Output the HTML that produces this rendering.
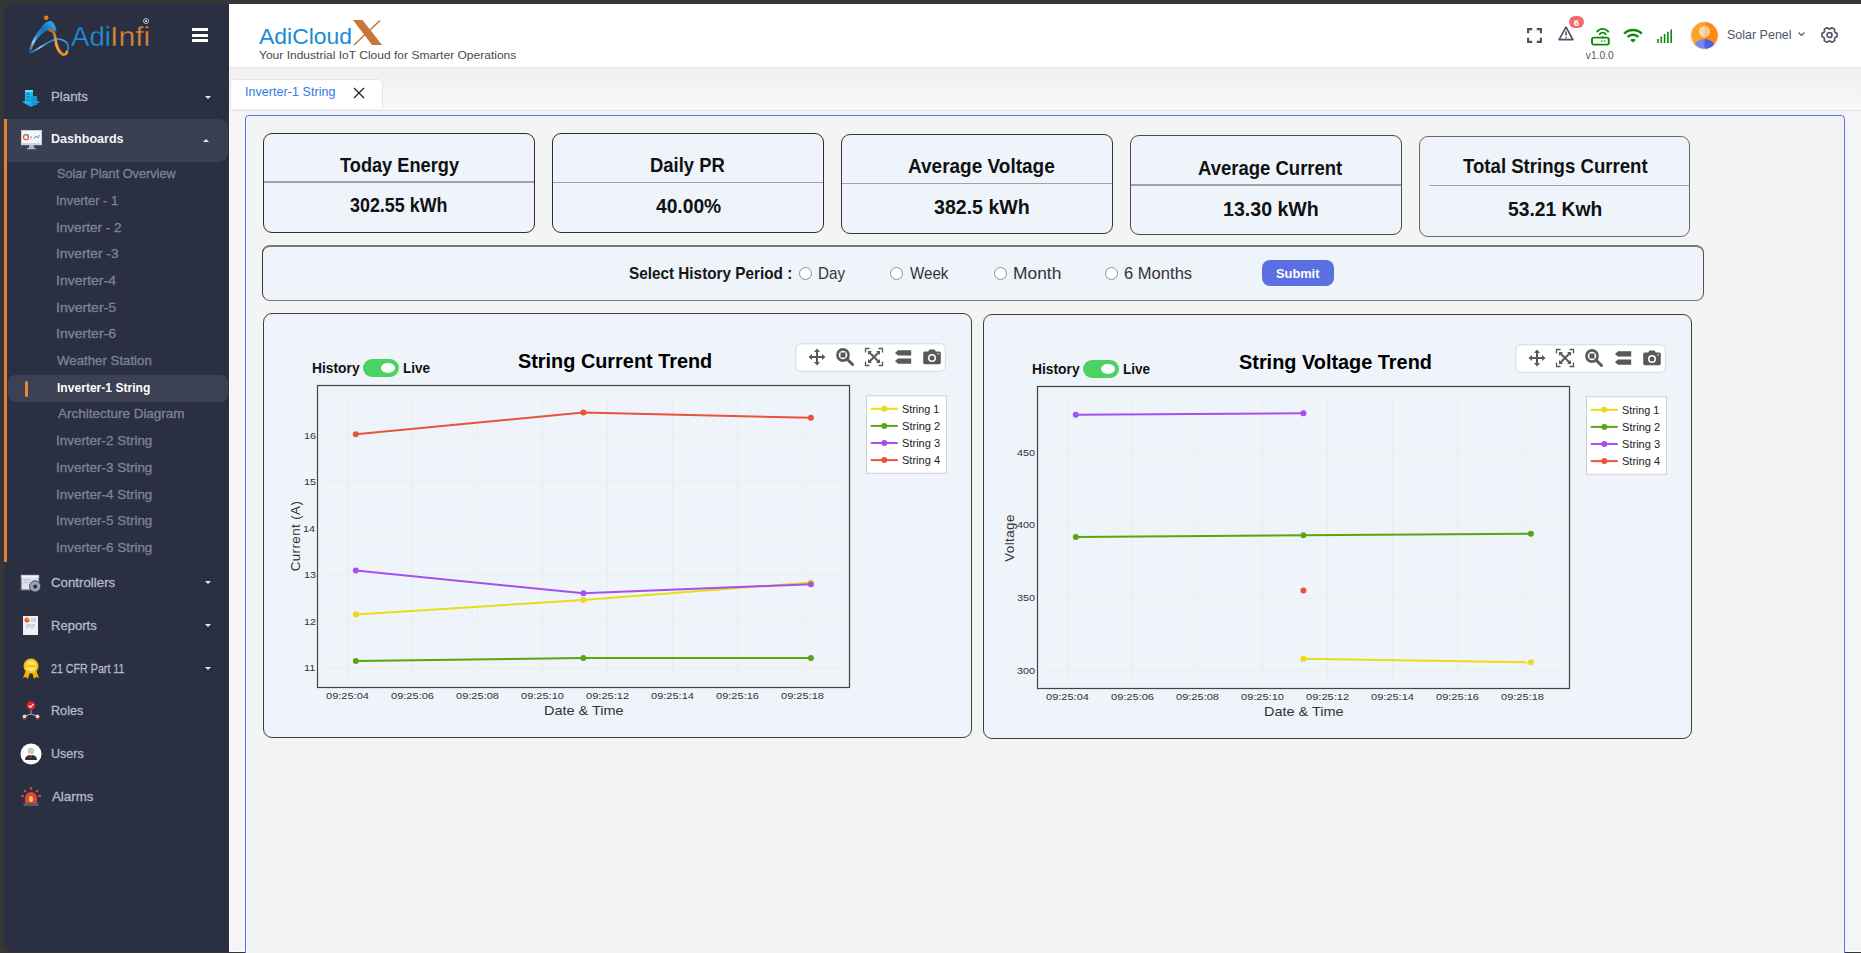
<!DOCTYPE html>
<html><head><meta charset="utf-8"><style>
*{box-sizing:border-box;margin:0;padding:0}
html,body{width:1861px;height:953px;overflow:hidden;background:#363636;font-family:"Liberation Sans",sans-serif}
.ab{position:absolute}
.tx{position:absolute;line-height:1;white-space:nowrap}
svg{position:absolute;overflow:visible}
</style></head><body>
<div class="ab" style="left:229px;top:4px;width:1632px;height:948px;background:#f5f5f8"></div>
<div class="ab" style="left:229px;top:4px;width:1px;height:948px;background:#fff"></div>
<div class="ab" style="left:229px;top:4px;width:1632px;height:64px;background:#fff;border-bottom:1px solid #e9e9ee"></div>
<div class="ab" style="left:4px;top:4px;width:225px;height:948px;background:#2a2f42;border-radius:8px 0 0 8px"></div>
<div class="ab" style="left:229px;top:951px;width:1632px;height:1px;background:#fff"></div>
<svg style="left:24px;top:12px" width="50" height="48" viewBox="0 0 50 48">
<defs><linearGradient id="lgb" x1="0" y1="1" x2="0.7" y2="0"><stop offset="0" stop-color="#1a5a95"/><stop offset="0.3" stop-color="#8fd0f5"/><stop offset="0.5" stop-color="#2a8ad6"/><stop offset="0.75" stop-color="#1670b8"/><stop offset="1" stop-color="#2fa0e6"/></linearGradient>
<linearGradient id="lgb2" x1="0" y1="1" x2="1" y2="0"><stop offset="0" stop-color="#1a5a95"/><stop offset="0.35" stop-color="#8fd0f5"/><stop offset="0.6" stop-color="#1e86d4"/><stop offset="1" stop-color="#3aa4e8"/></linearGradient>
<linearGradient id="lgo" x1="0" y1="0" x2="0" y2="1"><stop offset="0" stop-color="#b06a30"/><stop offset="0.6" stop-color="#f3a555"/><stop offset="1" stop-color="#f08a25"/></linearGradient></defs>
<circle cx="22.2" cy="5.8" r="2.3" fill="#f07a22"/>
<path d="M5 40.3 C 6 32, 11 22, 20 12 C 23 9.5, 26 8.5, 28 9.5 C 30.5 11, 32 15, 32.5 19.5 C 30 18.3, 27 17.6, 25 18 C 18 20, 11 27, 7.5 38 Z" fill="url(#lgb)"/>
<path d="M5.5 41 C 12 39, 19 33, 26 29.5 C 32 26.5, 38 26.5, 42 30 C 45 33, 45 38, 42 40.5" fill="none" stroke="url(#lgb2)" stroke-width="1.7"/>
<path d="M25.5 18 C 29 18, 31 22, 31.5 27 C 32 33, 34 39, 38 42 C 40 43.5, 42.5 42, 43 40" fill="none" stroke="url(#lgo)" stroke-width="2.8" stroke-linecap="round"/>
</svg>
<div class="tx " style="left:70.80px;top:23.00px;font-size:28px;color:#1e90d8;font-weight:normal;letter-spacing:0px;transform-origin:0 0;transform:scaleX(0.9886);-webkit-text-stroke:0.3px #2a2f42;">Adi</div>
<div class="tx " style="left:109.78px;top:23.00px;font-size:28px;color:#d98435;font-weight:normal;letter-spacing:0px;transform-origin:0 0;transform:scaleX(1.0790);-webkit-text-stroke:0.3px #2a2f42;">Infi</div>
<div class="ab" style="left:143px;top:18px;width:6px;height:6px;border:0.8px solid #b8bcc8;border-radius:50%"></div>
<div class="ab" style="left:145px;top:20px;width:2px;height:2px;background:#b8bcc8"></div>
<div class="ab" style="left:191.7px;top:28px;width:16.30000000000001px;height:3.1000000000000014px;background:#fff;border-radius:0.5px"></div>
<div class="ab" style="left:191.7px;top:34px;width:16.30000000000001px;height:3.1000000000000014px;background:#fff;border-radius:0.5px"></div>
<div class="ab" style="left:191.7px;top:39.2px;width:16.30000000000001px;height:3.1000000000000014px;background:#fff;border-radius:0.5px"></div>
<div class="ab" style="left:7px;top:119px;width:221px;height:43px;background:#3a3f52;border-radius:0 9px 9px 0"></div>
<div class="ab" style="left:4px;top:119px;width:3px;height:443px;background:#d9843a"></div>
<div class="ab" style="left:8px;top:375px;width:220px;height:26.5px;background:#3b4053;border-radius:7px"></div>
<div class="ab" style="left:25px;top:381px;width:3px;height:16px;background:#e08a3a;border-radius:1.5px"></div>
<div class="tx " style="left:50.94px;top:91.00px;font-size:12.8px;color:#b3b8cf;font-weight:normal;letter-spacing:0px;transform-origin:0 0;transform:scaleX(1.0378);-webkit-text-stroke:0.3px #b3b8cf;">Plants</div>
<div class="ab" style="left:205.0px;top:95.5px;width:0;height:0;border-left:3.5px solid transparent;border-right:3.5px solid transparent;border-top:3.6px solid #e6e8f0"></div>
<svg style="left:21px;top:89px" width="20" height="18" viewBox="0 0 20 18">
<path d="M1 13 L10 18 L19 13 L10 9 Z" fill="#18a9e8"/>
<rect x="4" y="1" width="8" height="14" fill="#1fb6f0"/><rect x="4" y="1" width="8" height="2" fill="#6fd6ff"/>
<rect x="10" y="7" width="6" height="9" fill="#1597d6"/>
<path d="M5 5h4M5 8h4M5 11h4" stroke="#0a6aa8" stroke-width="0.9"/>
</svg>
<div class="tx " style="left:51.18px;top:133.00px;font-size:12.6px;color:#f2f3f7;font-weight:bold;letter-spacing:0px;transform-origin:0 0;transform:scaleX(0.9971);">Dashboards</div>
<div class="ab" style="left:202.5px;top:139.0px;width:0;height:0;border-left:3.5px solid transparent;border-right:3.5px solid transparent;border-bottom:3.6px solid #e6e8f0"></div>
<svg style="left:21px;top:130px" width="21" height="20" viewBox="0 0 21 20">
<rect x="0.5" y="0.5" width="20" height="13" fill="#f4f6f8" stroke="#c9d2da"/>
<rect x="0" y="13" width="21" height="2.2" fill="#c9d6de"/>
<rect x="8" y="15" width="5" height="3" fill="#a9b9c4"/><rect x="6" y="18" width="9" height="1.2" fill="#a9b9c4"/>
<circle cx="5" cy="7.2" r="2.5" fill="none" stroke="#e8553f" stroke-width="1.3"/>
<path d="M5 4.7 A2.5 2.5 0 0 1 7.5 7.2" stroke="#2aa6d9" stroke-width="1.3" fill="none"/>
<path d="M13 9l2-3 2 2 1.5-3" stroke="#3ba3d8" stroke-width="1" fill="none"/>
<rect x="9" y="6" width="2" height="3" fill="#f3b7b7"/>
</svg>
<div class="tx " style="left:56.93px;top:168.00px;font-size:12.6px;color:#7d8299;font-weight:normal;letter-spacing:0px;transform-origin:0 0;transform:scaleX(1.0092);-webkit-text-stroke:0.3px #7d8299;">Solar Plant Overview</div>
<div class="tx " style="left:56.34px;top:195.00px;font-size:12.6px;color:#7d8299;font-weight:normal;letter-spacing:0px;transform-origin:0 0;transform:scaleX(1.0199);-webkit-text-stroke:0.3px #7d8299;">Inverter - 1</div>
<div class="tx " style="left:56.28px;top:222.00px;font-size:12.6px;color:#7d8299;font-weight:normal;letter-spacing:0px;transform-origin:0 0;transform:scaleX(1.0768);-webkit-text-stroke:0.3px #7d8299;">Inverter - 2</div>
<div class="tx " style="left:56.26px;top:248.00px;font-size:12.6px;color:#7d8299;font-weight:normal;letter-spacing:0px;transform-origin:0 0;transform:scaleX(1.0905);-webkit-text-stroke:0.3px #7d8299;">Inverter -3</div>
<div class="tx " style="left:56.24px;top:275.00px;font-size:12.6px;color:#7d8299;font-weight:normal;letter-spacing:0px;transform-origin:0 0;transform:scaleX(1.1123);-webkit-text-stroke:0.3px #7d8299;">Inverter-4</div>
<div class="tx " style="left:56.24px;top:302.00px;font-size:12.6px;color:#7d8299;font-weight:normal;letter-spacing:0px;transform-origin:0 0;transform:scaleX(1.1149);-webkit-text-stroke:0.3px #7d8299;">Inverter-5</div>
<div class="tx " style="left:56.24px;top:328.00px;font-size:12.6px;color:#7d8299;font-weight:normal;letter-spacing:0px;transform-origin:0 0;transform:scaleX(1.1149);-webkit-text-stroke:0.3px #7d8299;">Inverter-6</div>
<div class="tx " style="left:57.43px;top:355.00px;font-size:12.6px;color:#7d8299;font-weight:normal;letter-spacing:0px;transform-origin:0 0;transform:scaleX(1.0526);-webkit-text-stroke:0.3px #7d8299;">Weather Station</div>
<div class="tx " style="left:56.71px;top:382.00px;font-size:12.6px;color:#ffffff;font-weight:bold;letter-spacing:0px;transform-origin:0 0;transform:scaleX(0.9593);">Inverter-1 String</div>
<div class="tx " style="left:57.50px;top:408.00px;font-size:12.6px;color:#7d8299;font-weight:normal;letter-spacing:0px;transform-origin:0 0;transform:scaleX(1.0701);-webkit-text-stroke:0.3px #7d8299;">Architecture Diagram</div>
<div class="tx " style="left:56.29px;top:435.00px;font-size:12.6px;color:#7d8299;font-weight:normal;letter-spacing:0px;transform-origin:0 0;transform:scaleX(1.0669);-webkit-text-stroke:0.3px #7d8299;">Inverter-2 String</div>
<div class="tx " style="left:56.29px;top:462.00px;font-size:12.6px;color:#7d8299;font-weight:normal;letter-spacing:0px;transform-origin:0 0;transform:scaleX(1.0669);-webkit-text-stroke:0.3px #7d8299;">Inverter-3 String</div>
<div class="tx " style="left:56.29px;top:489.00px;font-size:12.6px;color:#7d8299;font-weight:normal;letter-spacing:0px;transform-origin:0 0;transform:scaleX(1.0669);-webkit-text-stroke:0.3px #7d8299;">Inverter-4 String</div>
<div class="tx " style="left:56.29px;top:515.00px;font-size:12.6px;color:#7d8299;font-weight:normal;letter-spacing:0px;transform-origin:0 0;transform:scaleX(1.0669);-webkit-text-stroke:0.3px #7d8299;">Inverter-5 String</div>
<div class="tx " style="left:56.29px;top:542.00px;font-size:12.6px;color:#7d8299;font-weight:normal;letter-spacing:0px;transform-origin:0 0;transform:scaleX(1.0669);-webkit-text-stroke:0.3px #7d8299;">Inverter-6 String</div>
<div class="tx " style="left:51.34px;top:577.00px;font-size:12.8px;color:#b3b8cf;font-weight:normal;letter-spacing:0px;transform-origin:0 0;transform:scaleX(1.0378);-webkit-text-stroke:0.3px #b3b8cf;">Controllers</div>
<div class="ab" style="left:205.0px;top:581.2px;width:0;height:0;border-left:3.5px solid transparent;border-right:3.5px solid transparent;border-top:3.6px solid #e6e8f0"></div>
<div class="tx " style="left:50.96px;top:620.00px;font-size:12.8px;color:#b3b8cf;font-weight:normal;letter-spacing:0px;transform-origin:0 0;transform:scaleX(1.0201);-webkit-text-stroke:0.3px #b3b8cf;">Reports</div>
<div class="ab" style="left:205.0px;top:624.2px;width:0;height:0;border-left:3.5px solid transparent;border-right:3.5px solid transparent;border-top:3.6px solid #e6e8f0"></div>
<div class="tx " style="left:51.47px;top:663.00px;font-size:12.8px;color:#b3b8cf;font-weight:normal;letter-spacing:0px;transform-origin:0 0;transform:scaleX(0.8349);-webkit-text-stroke:0.3px #b3b8cf;">21 CFR Part 11</div>
<div class="ab" style="left:205.0px;top:667.2px;width:0;height:0;border-left:3.5px solid transparent;border-right:3.5px solid transparent;border-top:3.6px solid #e6e8f0"></div>
<div class="tx " style="left:50.99px;top:705.00px;font-size:12.8px;color:#b3b8cf;font-weight:normal;letter-spacing:0px;transform-origin:0 0;transform:scaleX(0.9862);-webkit-text-stroke:0.3px #b3b8cf;">Roles</div>
<div class="tx " style="left:51.06px;top:748.00px;font-size:12.8px;color:#b3b8cf;font-weight:normal;letter-spacing:0px;transform-origin:0 0;transform:scaleX(0.9781);-webkit-text-stroke:0.3px #b3b8cf;">Users</div>
<div class="tx " style="left:52.00px;top:791.00px;font-size:12.8px;color:#b3b8cf;font-weight:normal;letter-spacing:0px;transform-origin:0 0;transform:scaleX(1.0391);-webkit-text-stroke:0.3px #b3b8cf;">Alarms</div>
<svg style="left:20px;top:574px" width="24" height="20" viewBox="0 0 24 20">
<rect x="1.3" y="1.3" width="17.5" height="14.5" fill="#dfe2ea" stroke="#8a8d96" stroke-width="1.1"/><rect x="1.3" y="1.3" width="17.5" height="2.2" fill="#f2f3f6"/>
<path d="M3.5 6h7M3.5 8.5h5" stroke="#b5b9c6" stroke-width="0.9"/>
<circle cx="15.1" cy="12.4" r="5.6" fill="#9aa0b6" stroke="#2a2f42" stroke-width="0.8"/><circle cx="15.1" cy="12.4" r="2" fill="#2a2f42"/>
</svg>
<svg style="left:23px;top:616px" width="15" height="19" viewBox="0 0 15 19">
<rect x="0" y="0" width="15" height="19" fill="#eef0f3"/><circle cx="4" cy="4" r="2.5" fill="#e85a3a"/><path d="M4 4 L4 1.5 A2.5 2.5 0 0 1 6.5 4Z" fill="#f5b400"/>
<path d="M8 3h5M8 5h5M3 9h9M3 12l3-2 3 2 3-3" stroke="#aab" stroke-width="0.8" fill="none"/>
</svg>
<svg style="left:22px;top:658px" width="18" height="22" viewBox="0 0 18 22">
<path d="M4 12 L1 20 L4 19 L6 21 L8 14Z M14 12 L17 20 L14 19 L12 21 L10 14Z" fill="#f1b300"/>
<circle cx="9" cy="8" r="7.5" fill="#f4c20d"/><circle cx="9" cy="8" r="5.2" fill="#fde08a"/><rect x="4.5" y="6.8" width="9" height="2.6" fill="#f4c20d"/>
</svg>
<svg style="left:22px;top:701px" width="18" height="20" viewBox="0 0 18 20">
<circle cx="9" cy="4.5" r="4.3" fill="#e8202a"/><path d="M6.8 4.6l1.6 1.6 3-3" stroke="#fff" stroke-width="1.2" fill="none"/>
<path d="M9 9v4M9 13l-6 2M9 13l6 2" stroke="#ccc" stroke-width="0.8"/>
<circle cx="2.5" cy="15.5" r="2" fill="#cfd3da"/><circle cx="15.5" cy="15.5" r="2" fill="#cfd3da"/>
<path d="M1 18h3M14 18h3" stroke="#d02828" stroke-width="1.5"/>
</svg>
<svg style="left:20px;top:743px" width="22" height="22" viewBox="0 0 22 22">
<circle cx="11" cy="11" r="10.5" fill="#fff"/><circle cx="11" cy="8" r="3.3" fill="#c9c9c9"/><path d="M5 17 Q5 12 11 12 Q17 12 17 17Z" fill="#333"/><path d="M10 12l1 3 1-3z" fill="#d42"/>
</svg>
<svg style="left:20px;top:786px" width="22" height="22" viewBox="0 0 22 22">
<path d="M11 1v3M4 4l2 2M18 4l-2 2M1 10h3M18 10h3" stroke="#f05a4a" stroke-width="1.3"/>
<path d="M5 17 V12 A6 6 0 0 1 17 12 V17Z" fill="#e8403a"/><ellipse cx="11" cy="13" rx="2" ry="3" fill="#ffd24a"/>
<rect x="3.5" y="17" width="15" height="3" fill="#555c6a"/>
</svg>
<div class="tx " style="left:259.00px;top:26.00px;font-size:22.6px;color:#1a8bd6;font-weight:normal;letter-spacing:0px;transform-origin:0 0;transform:scaleX(1.0147);">AdiCloud</div>
<svg style="left:352px;top:19px" width="32" height="27" viewBox="0 0 32 27">
<path d="M1 1 L10.5 1 L30 26 L20 26 Z" fill="#c8773c"/>
<path d="M28 1.5 L2 26" stroke="#c8773c" stroke-width="1.6"/>
</svg>
<div class="tx " style="left:258.70px;top:50.00px;font-size:11.4px;color:#4a4a4a;font-weight:normal;letter-spacing:0px;transform-origin:0 0;transform:scaleX(1.0556);">Your Industrial IoT Cloud for Smarter Operations</div>
<svg style="left:1527px;top:28px" width="15" height="15" viewBox="0 0 15 15">
<path d="M1.1 5.2V1.1H5.2M9.8 1.1H13.9V5.2M13.9 9.8V13.9H9.8M5.2 13.9H1.1V9.8" fill="none" stroke="#4b5162" stroke-width="2.1"/>
</svg>
<svg style="left:1558.3px;top:26px" width="16" height="15" viewBox="0 0 16 15">
<path d="M8 1.2 L14.9 13.6 H1.1 Z" fill="none" stroke="#4b5162" stroke-width="1.7" stroke-linejoin="round"/>
<path d="M8 5.6v4" stroke="#4b5162" stroke-width="1.5"/><circle cx="8" cy="11.5" r="0.85" fill="#4b5162"/>
</svg>
<div class="ab" style="left:1569px;top:16px;width:15px;height:12px;border-radius:7px;background:#ef6b6b"></div>
<div class="tx " style="left:1576.50px;top:18.00px;font-size:9.5px;color:#fff;font-weight:bold;letter-spacing:0px;transform:translateX(-50%);">6</div>
<svg style="left:1590.5px;top:26.5px" width="19" height="18.5" viewBox="0 0 19 18.5">
<path d="M6.2 4.6 A7 7 0 0 1 17.2 4.6" fill="none" stroke="#0b8a0b" stroke-width="1.8" stroke-linecap="round"/>
<path d="M8.6 7.2 A3.8 3.8 0 0 1 14.8 7.2" fill="none" stroke="#0b8a0b" stroke-width="1.8" stroke-linecap="round"/>
<path d="M11.7 9.3v2.4" stroke="#0b8a0b" stroke-width="1.5"/>
<rect x="1" y="10.6" width="16.8" height="7" rx="1.8" fill="none" stroke="#0b8a0b" stroke-width="1.9"/>
<circle cx="10.8" cy="14.1" r="0.8" fill="#0b8a0b"/><circle cx="13.6" cy="14.1" r="0.8" fill="#0b8a0b"/>
</svg>
<div class="tx " style="left:1599.70px;top:51.00px;font-size:10.2px;color:#555;font-weight:normal;letter-spacing:0px;transform:translateX(-50%);">v1.0.0</div>
<svg style="left:1623px;top:29px" width="20" height="14" viewBox="0 0 20 14">
<path d="M1.2 4.6 A12.5 12.5 0 0 1 18.8 4.6" fill="none" stroke="#0b8a0b" stroke-width="2.4"/>
<path d="M4.6 8 A7.5 7.5 0 0 1 15.4 8" fill="none" stroke="#0b8a0b" stroke-width="2.4"/>
<path d="M7.2 11 L10 13.6 L12.8 11 A4 4 0 0 0 7.2 11Z" fill="#0b8a0b"/>
</svg>
<svg style="left:1656px;top:29px" width="18" height="15" viewBox="0 0 18 15">
<path d="M2 14V10M5.3 14V7.5M8.6 14V5M11.9 14V2.8M15.2 14V0.5" stroke="#0b8a0b" stroke-width="1.6"/>
</svg>
<svg style="left:1689px;top:20px" width="31" height="31" viewBox="0 0 31 31">
<circle cx="15.5" cy="15.5" r="15" fill="#f4f5f8"/>
<clipPath id="avc"><circle cx="15.5" cy="15.3" r="13.3"/></clipPath>
<g clip-path="url(#avc)">
<rect x="0" y="0" width="15.5" height="31" fill="#fca329"/><rect x="15.5" y="0" width="15.5" height="31" fill="#ff8a0d"/>
<circle cx="15.5" cy="11.5" r="5.5" fill="#fdd9a6"/><path d="M15.5 6 A5.5 5.5 0 0 1 15.5 17Z" fill="#fcc68a"/>
<path d="M4 31 Q5 19 15.5 19 Q26 19 27 31Z" fill="#7a86ec"/><path d="M15.5 19 Q26 19 27 31 H15.5Z" fill="#4f5fe5"/>
</g></svg>
<div class="tx " style="left:1727.44px;top:29.00px;font-size:12.1px;color:#4f5567;font-weight:normal;letter-spacing:0px;transform-origin:0 0;transform:scaleX(1.0322);">Solar Penel</div>
<svg style="left:1797px;top:31px" width="9" height="6" viewBox="0 0 9 6"><path d="M1.5 1.5 L4.5 4.5 L7.5 1.5" fill="none" stroke="#555b6b" stroke-width="1.2"/></svg>
<svg style="left:1820px;top:26px" width="19" height="18" viewBox="0 0 19 18">
<path d="M17.10 9.00 L17.10 9.13 L17.10 9.27 L17.09 9.40 L17.08 9.53 L17.07 9.66 L17.06 9.79 L17.04 9.93 L17.03 10.06 L17.01 10.19 L16.98 10.32 L16.96 10.45 L16.93 10.58 L16.91 10.71 L16.83 10.83 L16.67 10.92 L16.46 10.99 L16.21 11.05 L15.95 11.10 L15.71 11.14 L15.49 11.18 L15.33 11.24 L15.25 11.32 L15.21 11.42 L15.16 11.52 L15.12 11.62 L15.07 11.72 L15.02 11.81 L14.97 11.91 L14.92 12.01 L14.87 12.10 L14.81 12.19 L14.76 12.29 L14.70 12.38 L14.64 12.47 L14.58 12.56 L14.52 12.64 L14.45 12.73 L14.39 12.82 L14.36 12.93 L14.38 13.10 L14.45 13.31 L14.54 13.54 L14.63 13.79 L14.71 14.03 L14.75 14.25 L14.75 14.43 L14.68 14.56 L14.59 14.65 L14.49 14.74 L14.39 14.82 L14.28 14.91 L14.18 14.99 L14.07 15.07 L13.97 15.15 L13.86 15.23 L13.75 15.30 L13.64 15.37 L13.53 15.45 L13.41 15.51 L13.30 15.58 L13.18 15.65 L13.07 15.71 L12.95 15.77 L12.83 15.83 L12.71 15.89 L12.59 15.94 L12.47 16.00 L12.35 16.05 L12.22 16.10 L12.10 16.14 L11.97 16.19 L11.85 16.23 L11.72 16.27 L11.58 16.26 L11.42 16.17 L11.25 16.02 L11.08 15.84 L10.91 15.64 L10.75 15.44 L10.61 15.28 L10.48 15.17 L10.36 15.14 L10.26 15.15 L10.15 15.17 L10.04 15.18 L9.93 15.18 L9.82 15.19 L9.72 15.20 L9.61 15.20 L9.50 15.20 L9.39 15.20 L9.28 15.20 L9.18 15.19 L9.07 15.18 L8.96 15.18 L8.85 15.17 L8.74 15.15 L8.64 15.14 L8.52 15.17 L8.39 15.28 L8.25 15.44 L8.09 15.64 L7.92 15.84 L7.75 16.02 L7.58 16.17 L7.42 16.26 L7.28 16.27 L7.15 16.23 L7.03 16.19 L6.90 16.14 L6.78 16.10 L6.65 16.05 L6.53 16.00 L6.41 15.94 L6.29 15.89 L6.17 15.83 L6.05 15.77 L5.93 15.71 L5.82 15.65 L5.70 15.58 L5.59 15.51 L5.47 15.45 L5.36 15.37 L5.25 15.30 L5.14 15.23 L5.03 15.15 L4.93 15.07 L4.82 14.99 L4.72 14.91 L4.61 14.82 L4.51 14.74 L4.41 14.65 L4.32 14.56 L4.25 14.43 L4.25 14.25 L4.29 14.03 L4.37 13.79 L4.46 13.54 L4.55 13.31 L4.62 13.10 L4.64 12.93 L4.61 12.82 L4.55 12.73 L4.48 12.64 L4.42 12.56 L4.36 12.47 L4.30 12.38 L4.24 12.29 L4.19 12.19 L4.13 12.10 L4.08 12.01 L4.03 11.91 L3.98 11.81 L3.93 11.72 L3.88 11.62 L3.84 11.52 L3.79 11.42 L3.75 11.32 L3.67 11.24 L3.51 11.18 L3.29 11.14 L3.05 11.10 L2.79 11.05 L2.54 10.99 L2.33 10.92 L2.17 10.83 L2.09 10.71 L2.07 10.58 L2.04 10.45 L2.02 10.32 L1.99 10.19 L1.97 10.06 L1.96 9.93 L1.94 9.79 L1.93 9.66 L1.92 9.53 L1.91 9.40 L1.90 9.27 L1.90 9.13 L1.90 9.00 L1.90 8.87 L1.90 8.73 L1.91 8.60 L1.92 8.47 L1.93 8.34 L1.94 8.21 L1.96 8.07 L1.97 7.94 L1.99 7.81 L2.02 7.68 L2.04 7.55 L2.07 7.42 L2.09 7.29 L2.17 7.17 L2.33 7.08 L2.54 7.01 L2.79 6.95 L3.05 6.90 L3.29 6.86 L3.51 6.82 L3.67 6.76 L3.75 6.68 L3.79 6.58 L3.84 6.48 L3.88 6.38 L3.93 6.28 L3.98 6.19 L4.03 6.09 L4.08 5.99 L4.13 5.90 L4.19 5.81 L4.24 5.71 L4.30 5.62 L4.36 5.53 L4.42 5.44 L4.48 5.36 L4.55 5.27 L4.61 5.18 L4.64 5.07 L4.62 4.90 L4.55 4.69 L4.46 4.46 L4.37 4.21 L4.29 3.97 L4.25 3.75 L4.25 3.57 L4.32 3.44 L4.41 3.35 L4.51 3.26 L4.61 3.18 L4.72 3.09 L4.82 3.01 L4.93 2.93 L5.03 2.85 L5.14 2.77 L5.25 2.70 L5.36 2.63 L5.47 2.55 L5.59 2.49 L5.70 2.42 L5.82 2.35 L5.93 2.29 L6.05 2.23 L6.17 2.17 L6.29 2.11 L6.41 2.06 L6.53 2.00 L6.65 1.95 L6.78 1.90 L6.90 1.86 L7.03 1.81 L7.15 1.77 L7.28 1.73 L7.42 1.74 L7.58 1.83 L7.75 1.98 L7.92 2.16 L8.09 2.36 L8.25 2.56 L8.39 2.72 L8.52 2.83 L8.64 2.86 L8.74 2.85 L8.85 2.83 L8.96 2.82 L9.07 2.82 L9.18 2.81 L9.28 2.80 L9.39 2.80 L9.50 2.80 L9.61 2.80 L9.72 2.80 L9.82 2.81 L9.93 2.82 L10.04 2.82 L10.15 2.83 L10.26 2.85 L10.36 2.86 L10.48 2.83 L10.61 2.72 L10.75 2.56 L10.91 2.36 L11.08 2.16 L11.25 1.98 L11.42 1.83 L11.58 1.74 L11.72 1.73 L11.85 1.77 L11.97 1.81 L12.10 1.86 L12.22 1.90 L12.35 1.95 L12.47 2.00 L12.59 2.06 L12.71 2.11 L12.83 2.17 L12.95 2.23 L13.07 2.29 L13.18 2.35 L13.30 2.42 L13.41 2.49 L13.53 2.55 L13.64 2.63 L13.75 2.70 L13.86 2.77 L13.97 2.85 L14.07 2.93 L14.18 3.01 L14.28 3.09 L14.39 3.18 L14.49 3.26 L14.59 3.35 L14.68 3.44 L14.75 3.57 L14.75 3.75 L14.71 3.97 L14.63 4.21 L14.54 4.46 L14.45 4.69 L14.38 4.90 L14.36 5.07 L14.39 5.18 L14.45 5.27 L14.52 5.36 L14.58 5.44 L14.64 5.53 L14.70 5.62 L14.76 5.71 L14.81 5.81 L14.87 5.90 L14.92 5.99 L14.97 6.09 L15.02 6.19 L15.07 6.28 L15.12 6.38 L15.16 6.48 L15.21 6.58 L15.25 6.68 L15.33 6.76 L15.49 6.82 L15.71 6.86 L15.95 6.90 L16.21 6.95 L16.46 7.01 L16.67 7.08 L16.83 7.17 L16.91 7.29 L16.93 7.42 L16.96 7.55 L16.98 7.68 L17.01 7.81 L17.03 7.94 L17.04 8.07 L17.06 8.21 L17.07 8.34 L17.08 8.47 L17.09 8.60 L17.10 8.73 L17.10 8.87Z" fill="none" stroke="#50566a" stroke-width="1.65" stroke-linejoin="round"/>
<circle cx="9.5" cy="9" r="2.5" fill="none" stroke="#4b5162" stroke-width="1.7"/>
</svg>
<div class="ab" style="left:229px;top:68px;width:1632px;height:43px;background:linear-gradient(#efeff2,#f8f8fa);border-bottom:1px solid #e2e3e8"></div>
<div class="ab" style="left:230px;top:79px;width:153px;height:28.5px;background:#fff;border:1px solid #e4e5ea;border-bottom:none;border-radius:5px 5px 0 0"></div>
<div class="tx " style="left:245.00px;top:86.00px;font-size:12.4px;color:#2f7ae5;font-weight:normal;letter-spacing:0.1px;">Inverter-1 String</div>
<svg style="left:353px;top:87px" width="12" height="12" viewBox="0 0 12 12"><path d="M1 1L11 11M11 1L1 11" stroke="#222" stroke-width="1.3"/></svg>
<div class="ab" style="left:245px;top:115px;width:1599.5px;height:850px;background:#f4f4f4;border:1.5px solid #5b73ea;border-radius:4px"></div>
<div class="ab" style="left:263px;top:132.7px;width:271.5px;height:100.0px;background:#eff4fb;border:1.4px solid #2e2e33;border-radius:9px"></div>
<div class="ab" style="left:264px;top:181.2px;width:269.5px;height:1.6000000000000227px;background:#9da3ab"></div>
<div class="tx " style="left:339.62px;top:155.00px;font-size:20.6px;color:#111;font-weight:bold;letter-spacing:0px;transform-origin:0 0;transform:scaleX(0.8838);">Today Energy</div>
<div class="tx " style="left:350.35px;top:196.00px;font-size:19.4px;color:#111;font-weight:bold;letter-spacing:0px;transform-origin:0 0;transform:scaleX(0.9232);">302.55 kWh</div>
<div class="ab" style="left:552px;top:132.7px;width:271.5px;height:100.0px;background:#eff4fb;border:1.4px solid #2e2e33;border-radius:9px"></div>
<div class="ab" style="left:553px;top:181.5px;width:269.5px;height:1.6000000000000227px;background:#9da3ab"></div>
<div class="tx " style="left:650.40px;top:155.00px;font-size:20.6px;color:#111;font-weight:bold;letter-spacing:0px;transform-origin:0 0;transform:scaleX(0.8951);">Daily PR</div>
<div class="tx " style="left:655.51px;top:197.00px;font-size:19.4px;color:#111;font-weight:bold;letter-spacing:0px;transform-origin:0 0;transform:scaleX(0.9910);">40.00%</div>
<div class="ab" style="left:841.3px;top:133.7px;width:271.70000000000005px;height:100.0px;background:#eff4fb;border:1.4px solid #36363a;border-radius:9px"></div>
<div class="ab" style="left:842.3px;top:182.5px;width:269.70000000000005px;height:1.6000000000000227px;background:#9da3ab"></div>
<div class="tx " style="left:908.02px;top:156.00px;font-size:20.6px;color:#111;font-weight:bold;letter-spacing:0px;transform-origin:0 0;transform:scaleX(0.9227);">Average Voltage</div>
<div class="tx " style="left:933.91px;top:198.00px;font-size:19.4px;color:#111;font-weight:bold;letter-spacing:0px;transform-origin:0 0;transform:scaleX(1.0095);">382.5 kWh</div>
<div class="ab" style="left:1130px;top:135.2px;width:271.5999999999999px;height:100px;background:#eff4fb;border:1.4px solid #4a4a4e;border-radius:9px"></div>
<div class="ab" style="left:1131px;top:184.2px;width:269.5999999999999px;height:1.6000000000000227px;background:#9da3ab"></div>
<div class="tx " style="left:1198.24px;top:158.00px;font-size:20.6px;color:#111;font-weight:bold;letter-spacing:0px;transform-origin:0 0;transform:scaleX(0.8983);">Average Current</div>
<div class="tx " style="left:1223.02px;top:200.00px;font-size:19.4px;color:#111;font-weight:bold;letter-spacing:0px;transform-origin:0 0;transform:scaleX(1.0104);">13.30 kWh</div>
<div class="ab" style="left:1419px;top:136.0px;width:271.29999999999995px;height:100.79999999999998px;background:#eff4fb;border:1.4px solid #6a6a6e;border-radius:9px"></div>
<div class="ab" style="left:1428.5px;top:184.79999999999998px;width:260.79999999999995px;height:1.6000000000000227px;background:#9da3ab"></div>
<div class="tx " style="left:1462.51px;top:156.00px;font-size:20.6px;color:#111;font-weight:bold;letter-spacing:0px;transform-origin:0 0;transform:scaleX(0.9032);">Total Strings Current</div>
<div class="tx " style="left:1507.92px;top:200.00px;font-size:19.4px;color:#111;font-weight:bold;letter-spacing:0px;transform-origin:0 0;transform:scaleX(0.9944);">53.21 Kwh</div>
<div class="ab" style="left:262px;top:245.3px;width:1441.5px;height:55.9px;background:#eff4fb;border:1.5px solid #777;border-top-width:2px;border-left-color:#3a3a3a;border-right-color:#505050;border-radius:8px"></div>
<div class="tx " style="left:628.54px;top:266.00px;font-size:16.6px;color:#161616;font-weight:bold;letter-spacing:0px;transform-origin:0 0;transform:scaleX(0.9219);">Select History Period :</div>
<div class="ab" style="left:798.5px;top:267.2px;width:13px;height:13px;border:1px solid #8f8f8f;border-radius:50%;background:#fff"></div>
<div class="tx " style="left:817.69px;top:266.00px;font-size:16.6px;color:#333;font-weight:normal;letter-spacing:0px;transform-origin:0 0;transform:scaleX(0.9142);">Day</div>
<div class="ab" style="left:889.8px;top:267.2px;width:13px;height:13px;border:1px solid #8f8f8f;border-radius:50%;background:#fff"></div>
<div class="tx " style="left:909.92px;top:266.00px;font-size:16.6px;color:#333;font-weight:normal;letter-spacing:0px;transform-origin:0 0;transform:scaleX(0.9125);">Week</div>
<div class="ab" style="left:993.8px;top:267.2px;width:13px;height:13px;border:1px solid #8f8f8f;border-radius:50%;background:#fff"></div>
<div class="tx " style="left:1012.51px;top:266.00px;font-size:16.6px;color:#333;font-weight:normal;letter-spacing:0px;transform-origin:0 0;transform:scaleX(1.0471);">Month</div>
<div class="ab" style="left:1104.8px;top:267.2px;width:13px;height:13px;border:1px solid #8f8f8f;border-radius:50%;background:#fff"></div>
<div class="tx " style="left:1124.37px;top:266.00px;font-size:16.6px;color:#333;font-weight:normal;letter-spacing:0px;transform-origin:0 0;transform:scaleX(0.9985);">6 Months</div>
<div class="ab" style="left:1262px;top:259.7px;width:72px;height:26.5px;background:#5a6fe2;border-radius:8px"></div>
<div class="tx " style="left:1276.42px;top:267.00px;font-size:13.6px;color:#fff;font-weight:bold;letter-spacing:0px;transform-origin:0 0;transform:scaleX(0.9430);">Submit</div>
<div class="ab" style="left:263.0px;top:313.0px;width:709px;height:425px;background:#eff4fb;border:1.3px solid #3f3f3f;border-radius:9px"></div>
<div class="tx " style="left:311.70px;top:361.00px;font-size:14.2px;color:#111;font-weight:bold;letter-spacing:0px;transform-origin:0 0;transform:scaleX(0.9744);">History</div>
<div class="ab" style="left:363px;top:359.2px;width:36px;height:18px;border-radius:9px;background:#4cd263"></div>
<div class="ab" style="left:381.3px;top:363.2px;width:14px;height:10px;border-radius:50%;background:#fff"></div>
<div class="tx " style="left:402.52px;top:361.00px;font-size:14.2px;color:#111;font-weight:bold;letter-spacing:0px;transform-origin:0 0;transform:scaleX(0.9563);">Live</div>
<div class="tx " style="left:518.40px;top:351.00px;font-size:20.8px;color:#000;font-weight:bold;letter-spacing:0px;transform-origin:0 0;transform:scaleX(0.9551);">String Current Trend</div>
<svg style="left:0;top:0" width="1861" height="953"><line x1="347.6" y1="396" x2="347.6" y2="677.5" stroke="#ececec" stroke-width="1"/><line x1="412.6" y1="396" x2="412.6" y2="677.5" stroke="#ececec" stroke-width="1"/><line x1="477.6" y1="396" x2="477.6" y2="677.5" stroke="#ececec" stroke-width="1"/><line x1="542.6" y1="396" x2="542.6" y2="677.5" stroke="#ececec" stroke-width="1"/><line x1="607.6" y1="396" x2="607.6" y2="677.5" stroke="#ececec" stroke-width="1"/><line x1="672.6" y1="396" x2="672.6" y2="677.5" stroke="#ececec" stroke-width="1"/><line x1="737.6" y1="396" x2="737.6" y2="677.5" stroke="#ececec" stroke-width="1"/><line x1="802.6" y1="396" x2="802.6" y2="677.5" stroke="#ececec" stroke-width="1"/><line x1="327" y1="667.6" x2="840" y2="667.6" stroke="#ececec" stroke-width="1"/><line x1="327" y1="621.1" x2="840" y2="621.1" stroke="#ececec" stroke-width="1"/><line x1="327" y1="574.6" x2="840" y2="574.6" stroke="#ececec" stroke-width="1"/><line x1="327" y1="528.1" x2="840" y2="528.1" stroke="#ececec" stroke-width="1"/><line x1="327" y1="481.6" x2="840" y2="481.6" stroke="#ececec" stroke-width="1"/><line x1="327" y1="435.1" x2="840" y2="435.1" stroke="#ececec" stroke-width="1"/><rect x="317.5" y="385.5" width="532" height="302" fill="none" stroke="#444" stroke-width="1.2"/><path d="M355.8 614.6 L583.4 599.9 L810.9 582.5" fill="none" stroke="#eadc16" stroke-width="2"/><circle cx="355.8" cy="614.6" r="3.0" fill="#eadc16"/><circle cx="583.4" cy="599.9" r="3.0" fill="#eadc16"/><circle cx="810.9" cy="582.5" r="3.0" fill="#eadc16"/><path d="M355.8 661.0 L583.4 657.9 L810.9 658.0" fill="none" stroke="#5aa512" stroke-width="2"/><circle cx="355.8" cy="661.0" r="3.0" fill="#5aa512"/><circle cx="583.4" cy="657.9" r="3.0" fill="#5aa512"/><circle cx="810.9" cy="658.0" r="3.0" fill="#5aa512"/><path d="M355.8 434.3 L583.4 412.5 L810.9 417.8" fill="none" stroke="#e8533a" stroke-width="2"/><circle cx="355.8" cy="434.3" r="3.0" fill="#e8533a"/><circle cx="583.4" cy="412.5" r="3.0" fill="#e8533a"/><circle cx="810.9" cy="417.8" r="3.0" fill="#e8533a"/><path d="M355.8 570.4 L583.4 593.3 L810.9 584.2" fill="none" stroke="#a54ff0" stroke-width="2"/><circle cx="355.8" cy="570.4" r="3.0" fill="#a54ff0"/><circle cx="583.4" cy="593.3" r="3.0" fill="#a54ff0"/><circle cx="810.9" cy="584.2" r="3.0" fill="#a54ff0"/><rect x="866.5" y="395.8" width="80" height="77.5" fill="#fff" stroke="#d2d2d2" stroke-width="1"/><line x1="870.8" y1="408.8" x2="897.8" y2="408.8" stroke="#eadc16" stroke-width="2"/><circle cx="884.3" cy="408.8" r="3.0" fill="#eadc16"/><line x1="870.8" y1="425.90000000000003" x2="897.8" y2="425.90000000000003" stroke="#5aa512" stroke-width="2"/><circle cx="884.3" cy="425.90000000000003" r="3.0" fill="#5aa512"/><line x1="870.8" y1="443.0" x2="897.8" y2="443.0" stroke="#a54ff0" stroke-width="2"/><circle cx="884.3" cy="443.0" r="3.0" fill="#a54ff0"/><line x1="870.8" y1="460.1" x2="897.8" y2="460.1" stroke="#e8533a" stroke-width="2"/><circle cx="884.3" cy="460.1" r="3.0" fill="#e8533a"/><rect x="795.8" y="343.8" width="149.5" height="27.5" rx="5" fill="#fff" stroke="#d8d8d8" stroke-width="1"/></svg>
<div class="tx " style="left:902.11px;top:404.00px;font-size:11.1px;color:#222;font-weight:normal;letter-spacing:0px;transform-origin:0 0;transform:scaleX(0.9774);">String 1</div>
<div class="tx " style="left:902.10px;top:421.00px;font-size:11.1px;color:#222;font-weight:normal;letter-spacing:0px;transform-origin:0 0;transform:scaleX(1.0004);">String 2</div>
<div class="tx " style="left:902.10px;top:438.00px;font-size:11.1px;color:#222;font-weight:normal;letter-spacing:0px;transform-origin:0 0;transform:scaleX(0.9974);">String 3</div>
<div class="tx " style="left:902.10px;top:455.00px;font-size:11.1px;color:#222;font-weight:normal;letter-spacing:0px;transform-origin:0 0;transform:scaleX(0.9945);">String 4</div>
<div class="tx " style="left:326.16px;top:691.00px;font-size:9.9px;color:#333;font-weight:normal;letter-spacing:0px;transform-origin:0 0;transform:scaleX(1.1159);">09:25:04</div>
<div class="tx " style="left:391.16px;top:691.00px;font-size:9.9px;color:#333;font-weight:normal;letter-spacing:0px;transform-origin:0 0;transform:scaleX(1.1188);">09:25:06</div>
<div class="tx " style="left:456.16px;top:691.00px;font-size:9.9px;color:#333;font-weight:normal;letter-spacing:0px;transform-origin:0 0;transform:scaleX(1.1188);">09:25:08</div>
<div class="tx " style="left:521.16px;top:691.00px;font-size:9.9px;color:#333;font-weight:normal;letter-spacing:0px;transform-origin:0 0;transform:scaleX(1.1173);">09:25:10</div>
<div class="tx " style="left:586.16px;top:691.00px;font-size:9.9px;color:#333;font-weight:normal;letter-spacing:0px;transform-origin:0 0;transform:scaleX(1.1217);">09:25:12</div>
<div class="tx " style="left:651.16px;top:691.00px;font-size:9.9px;color:#333;font-weight:normal;letter-spacing:0px;transform-origin:0 0;transform:scaleX(1.1159);">09:25:14</div>
<div class="tx " style="left:716.16px;top:691.00px;font-size:9.9px;color:#333;font-weight:normal;letter-spacing:0px;transform-origin:0 0;transform:scaleX(1.1188);">09:25:16</div>
<div class="tx " style="left:781.16px;top:691.00px;font-size:9.9px;color:#333;font-weight:normal;letter-spacing:0px;transform-origin:0 0;transform:scaleX(1.1188);">09:25:18</div>
<div class="tx " style="left:304.42px;top:663.00px;font-size:9.9px;color:#333;font-weight:normal;letter-spacing:0px;transform-origin:0 0;transform:scaleX(1.1000);">11</div>
<div class="tx " style="left:303.66px;top:617.00px;font-size:9.9px;color:#333;font-weight:normal;letter-spacing:0px;transform-origin:0 0;transform:scaleX(1.1000);">12</div>
<div class="tx " style="left:303.55px;top:570.00px;font-size:9.9px;color:#333;font-weight:normal;letter-spacing:0px;transform-origin:0 0;transform:scaleX(1.1000);">13</div>
<div class="tx " style="left:303.44px;top:524.00px;font-size:9.9px;color:#333;font-weight:normal;letter-spacing:0px;transform-origin:0 0;transform:scaleX(1.1000);">14</div>
<div class="tx " style="left:303.55px;top:477.00px;font-size:9.9px;color:#333;font-weight:normal;letter-spacing:0px;transform-origin:0 0;transform:scaleX(1.1000);">15</div>
<div class="tx " style="left:303.55px;top:431.00px;font-size:9.9px;color:#333;font-weight:normal;letter-spacing:0px;transform-origin:0 0;transform:scaleX(1.1000);">16</div>
<div class="tx " style="left:543.84px;top:705.00px;font-size:12.8px;color:#333;font-weight:normal;letter-spacing:0px;transform-origin:0 0;transform:scaleX(1.1308);">Date &amp; Time</div>
<div class="tx" style="left:296px;top:536px;font-size:13.4px;color:#333;letter-spacing:0.4px;transform:translate(-50%,-50%) rotate(-90deg)">Current (A)</div>
<svg style="left:807.0px;top:347.0px" width="20" height="20" viewBox="0 0 20 20"><path d="M10 1.5 L13 5 H11 V9 H15 V7 L18.5 10 L15 13 V11 H11 V15 H13 L10 18.5 L7 15 H9 V11 H5 V13 L1.5 10 L5 7 V9 H9 V5 H7 Z" fill="#595959"/></svg>
<svg style="left:835.0px;top:347.0px" width="20" height="20" viewBox="0 0 20 20"><circle cx="8" cy="8" r="5.6" fill="none" stroke="#595959" stroke-width="2.6"/><rect x="5.5" y="5.5" width="5" height="5" fill="#595959"/><path d="M12 12 L17.5 17.5" stroke="#595959" stroke-width="3" stroke-linecap="round"/></svg>
<svg style="left:864.0px;top:347.0px" width="20" height="20" viewBox="0 0 20 20"><path d="M1.5 5.5V1.5H5.5M14.5 1.5H18.5V5.5M18.5 14.5V18.5H14.5M5.5 18.5H1.5V14.5" fill="none" stroke="#595959" stroke-width="1.3"/><path d="M5 5L15 15M15 5L5 15" stroke="#595959" stroke-width="2"/><path d="M4 4h4l-4 4zM16 4v4l-4-4zM16 16h-4l4-4zM4 16v-4l4 4z" fill="#595959"/></svg>
<svg style="left:893.0px;top:347.0px" width="20" height="20" viewBox="0 0 20 20"><path d="M5 3.2 H18.2 V8.6 H5 L2 5.9 Z" fill="#595959"/><path d="M5 11.4 H18.2 V16.8 H5 L2 14.1 Z" fill="#595959"/></svg>
<svg style="left:922.0px;top:347.0px" width="20" height="20" viewBox="0 0 20 20"><path d="M1.2 6.2 Q1.2 4.6 2.8 4.6 H6.2 L7.4 2.6 H12.6 L13.8 4.6 H17.2 Q18.8 4.6 18.8 6.2 V15.6 Q18.8 17.2 17.2 17.2 H2.8 Q1.2 17.2 1.2 15.6 Z" fill="#595959"/><circle cx="10" cy="10.9" r="4" fill="#fff"/><circle cx="10" cy="10.9" r="2.5" fill="#595959"/><rect x="15.6" y="6" width="1" height="1.6" fill="#fff"/></svg>
<div class="ab" style="left:983.0px;top:314.0px;width:709px;height:425px;background:#eff4fb;border:1.3px solid #3f3f3f;border-radius:9px"></div>
<div class="tx " style="left:1031.70px;top:362.00px;font-size:14.2px;color:#111;font-weight:bold;letter-spacing:0px;transform-origin:0 0;transform:scaleX(0.9744);">History</div>
<div class="ab" style="left:1083px;top:360.2px;width:36px;height:18px;border-radius:9px;background:#4cd263"></div>
<div class="ab" style="left:1101.3px;top:364.2px;width:14px;height:10px;border-radius:50%;background:#fff"></div>
<div class="tx " style="left:1122.52px;top:362.00px;font-size:14.2px;color:#111;font-weight:bold;letter-spacing:0px;transform-origin:0 0;transform:scaleX(0.9563);">Live</div>
<div class="tx " style="left:1238.90px;top:352.00px;font-size:20.8px;color:#000;font-weight:bold;letter-spacing:0px;transform-origin:0 0;transform:scaleX(0.9560);">String Voltage Trend</div>
<svg style="left:0;top:0" width="1861" height="953"><line x1="1067.6" y1="397" x2="1067.6" y2="678.5" stroke="#ececec" stroke-width="1"/><line x1="1132.6" y1="397" x2="1132.6" y2="678.5" stroke="#ececec" stroke-width="1"/><line x1="1197.6" y1="397" x2="1197.6" y2="678.5" stroke="#ececec" stroke-width="1"/><line x1="1262.6" y1="397" x2="1262.6" y2="678.5" stroke="#ececec" stroke-width="1"/><line x1="1327.6" y1="397" x2="1327.6" y2="678.5" stroke="#ececec" stroke-width="1"/><line x1="1392.6" y1="397" x2="1392.6" y2="678.5" stroke="#ececec" stroke-width="1"/><line x1="1457.6" y1="397" x2="1457.6" y2="678.5" stroke="#ececec" stroke-width="1"/><line x1="1522.6" y1="397" x2="1522.6" y2="678.5" stroke="#ececec" stroke-width="1"/><line x1="1047" y1="671.2" x2="1560" y2="671.2" stroke="#ececec" stroke-width="1"/><line x1="1047" y1="598.1" x2="1560" y2="598.1" stroke="#ececec" stroke-width="1"/><line x1="1047" y1="525.8" x2="1560" y2="525.8" stroke="#ececec" stroke-width="1"/><line x1="1047" y1="453.1" x2="1560" y2="453.1" stroke="#ececec" stroke-width="1"/><rect x="1037.5" y="386.5" width="532" height="302" fill="none" stroke="#444" stroke-width="1.2"/><path d="M1303.4 658.8 L1530.9 662.3" fill="none" stroke="#eadc16" stroke-width="2"/><circle cx="1303.4" cy="658.8" r="3.0" fill="#eadc16"/><circle cx="1530.9" cy="662.3" r="3.0" fill="#eadc16"/><path d="M1075.8 537.0 L1303.4 535.3 L1530.9 533.7" fill="none" stroke="#5aa512" stroke-width="2"/><circle cx="1075.8" cy="537.0" r="3.0" fill="#5aa512"/><circle cx="1303.4" cy="535.3" r="3.0" fill="#5aa512"/><circle cx="1530.9" cy="533.7" r="3.0" fill="#5aa512"/><path d="M1075.8 414.7 L1303.4 413.2" fill="none" stroke="#a54ff0" stroke-width="2"/><circle cx="1075.8" cy="414.7" r="3.0" fill="#a54ff0"/><circle cx="1303.4" cy="413.2" r="3.0" fill="#a54ff0"/><circle cx="1303.4" cy="590.6" r="3.0" fill="#e8533a"/><rect x="1586.5" y="396.8" width="80" height="77.5" fill="#fff" stroke="#d2d2d2" stroke-width="1"/><line x1="1590.8" y1="409.8" x2="1617.8" y2="409.8" stroke="#eadc16" stroke-width="2"/><circle cx="1604.3" cy="409.8" r="3.0" fill="#eadc16"/><line x1="1590.8" y1="426.90000000000003" x2="1617.8" y2="426.90000000000003" stroke="#5aa512" stroke-width="2"/><circle cx="1604.3" cy="426.90000000000003" r="3.0" fill="#5aa512"/><line x1="1590.8" y1="444.0" x2="1617.8" y2="444.0" stroke="#a54ff0" stroke-width="2"/><circle cx="1604.3" cy="444.0" r="3.0" fill="#a54ff0"/><line x1="1590.8" y1="461.1" x2="1617.8" y2="461.1" stroke="#e8533a" stroke-width="2"/><circle cx="1604.3" cy="461.1" r="3.0" fill="#e8533a"/><rect x="1515.8" y="344.8" width="149.5" height="27.5" rx="5" fill="#fff" stroke="#d8d8d8" stroke-width="1"/></svg>
<div class="tx " style="left:1622.11px;top:405.00px;font-size:11.1px;color:#222;font-weight:normal;letter-spacing:0px;transform-origin:0 0;transform:scaleX(0.9774);">String 1</div>
<div class="tx " style="left:1622.10px;top:422.00px;font-size:11.1px;color:#222;font-weight:normal;letter-spacing:0px;transform-origin:0 0;transform:scaleX(1.0004);">String 2</div>
<div class="tx " style="left:1622.10px;top:439.00px;font-size:11.1px;color:#222;font-weight:normal;letter-spacing:0px;transform-origin:0 0;transform:scaleX(0.9974);">String 3</div>
<div class="tx " style="left:1622.10px;top:456.00px;font-size:11.1px;color:#222;font-weight:normal;letter-spacing:0px;transform-origin:0 0;transform:scaleX(0.9945);">String 4</div>
<div class="tx " style="left:1046.16px;top:692.00px;font-size:9.9px;color:#333;font-weight:normal;letter-spacing:0px;transform-origin:0 0;transform:scaleX(1.1159);">09:25:04</div>
<div class="tx " style="left:1111.16px;top:692.00px;font-size:9.9px;color:#333;font-weight:normal;letter-spacing:0px;transform-origin:0 0;transform:scaleX(1.1188);">09:25:06</div>
<div class="tx " style="left:1176.16px;top:692.00px;font-size:9.9px;color:#333;font-weight:normal;letter-spacing:0px;transform-origin:0 0;transform:scaleX(1.1188);">09:25:08</div>
<div class="tx " style="left:1241.16px;top:692.00px;font-size:9.9px;color:#333;font-weight:normal;letter-spacing:0px;transform-origin:0 0;transform:scaleX(1.1173);">09:25:10</div>
<div class="tx " style="left:1306.16px;top:692.00px;font-size:9.9px;color:#333;font-weight:normal;letter-spacing:0px;transform-origin:0 0;transform:scaleX(1.1217);">09:25:12</div>
<div class="tx " style="left:1371.16px;top:692.00px;font-size:9.9px;color:#333;font-weight:normal;letter-spacing:0px;transform-origin:0 0;transform:scaleX(1.1159);">09:25:14</div>
<div class="tx " style="left:1436.16px;top:692.00px;font-size:9.9px;color:#333;font-weight:normal;letter-spacing:0px;transform-origin:0 0;transform:scaleX(1.1188);">09:25:16</div>
<div class="tx " style="left:1501.16px;top:692.00px;font-size:9.9px;color:#333;font-weight:normal;letter-spacing:0px;transform-origin:0 0;transform:scaleX(1.1188);">09:25:18</div>
<div class="tx " style="left:1017.45px;top:666.00px;font-size:9.9px;color:#333;font-weight:normal;letter-spacing:0px;transform-origin:0 0;transform:scaleX(1.1000);">300</div>
<div class="tx " style="left:1017.45px;top:593.00px;font-size:9.9px;color:#333;font-weight:normal;letter-spacing:0px;transform-origin:0 0;transform:scaleX(1.1000);">350</div>
<div class="tx " style="left:1017.45px;top:520.00px;font-size:9.9px;color:#333;font-weight:normal;letter-spacing:0px;transform-origin:0 0;transform:scaleX(1.1000);">400</div>
<div class="tx " style="left:1017.45px;top:448.00px;font-size:9.9px;color:#333;font-weight:normal;letter-spacing:0px;transform-origin:0 0;transform:scaleX(1.1000);">450</div>
<div class="tx " style="left:1263.84px;top:706.00px;font-size:12.8px;color:#333;font-weight:normal;letter-spacing:0px;transform-origin:0 0;transform:scaleX(1.1308);">Date &amp; Time</div>
<div class="tx" style="left:1010px;top:537.7px;font-size:13.4px;color:#333;letter-spacing:0.4px;transform:translate(-50%,-50%) rotate(-90deg)">Voltage</div>
<svg style="left:1527.0px;top:348.0px" width="20" height="20" viewBox="0 0 20 20"><path d="M10 1.5 L13 5 H11 V9 H15 V7 L18.5 10 L15 13 V11 H11 V15 H13 L10 18.5 L7 15 H9 V11 H5 V13 L1.5 10 L5 7 V9 H9 V5 H7 Z" fill="#595959"/></svg>
<svg style="left:1555.0px;top:348.0px" width="20" height="20" viewBox="0 0 20 20"><path d="M1.5 5.5V1.5H5.5M14.5 1.5H18.5V5.5M18.5 14.5V18.5H14.5M5.5 18.5H1.5V14.5" fill="none" stroke="#595959" stroke-width="1.3"/><path d="M5 5L15 15M15 5L5 15" stroke="#595959" stroke-width="2"/><path d="M4 4h4l-4 4zM16 4v4l-4-4zM16 16h-4l4-4zM4 16v-4l4 4z" fill="#595959"/></svg>
<svg style="left:1584.0px;top:348.0px" width="20" height="20" viewBox="0 0 20 20"><circle cx="8" cy="8" r="5.6" fill="none" stroke="#595959" stroke-width="2.6"/><rect x="5.5" y="5.5" width="5" height="5" fill="#595959"/><path d="M12 12 L17.5 17.5" stroke="#595959" stroke-width="3" stroke-linecap="round"/></svg>
<svg style="left:1613.0px;top:348.0px" width="20" height="20" viewBox="0 0 20 20"><path d="M5 3.2 H18.2 V8.6 H5 L2 5.9 Z" fill="#595959"/><path d="M5 11.4 H18.2 V16.8 H5 L2 14.1 Z" fill="#595959"/></svg>
<svg style="left:1642.0px;top:348.0px" width="20" height="20" viewBox="0 0 20 20"><path d="M1.2 6.2 Q1.2 4.6 2.8 4.6 H6.2 L7.4 2.6 H12.6 L13.8 4.6 H17.2 Q18.8 4.6 18.8 6.2 V15.6 Q18.8 17.2 17.2 17.2 H2.8 Q1.2 17.2 1.2 15.6 Z" fill="#595959"/><circle cx="10" cy="10.9" r="4" fill="#fff"/><circle cx="10" cy="10.9" r="2.5" fill="#595959"/><rect x="15.6" y="6" width="1" height="1.6" fill="#fff"/></svg>
</body></html>
